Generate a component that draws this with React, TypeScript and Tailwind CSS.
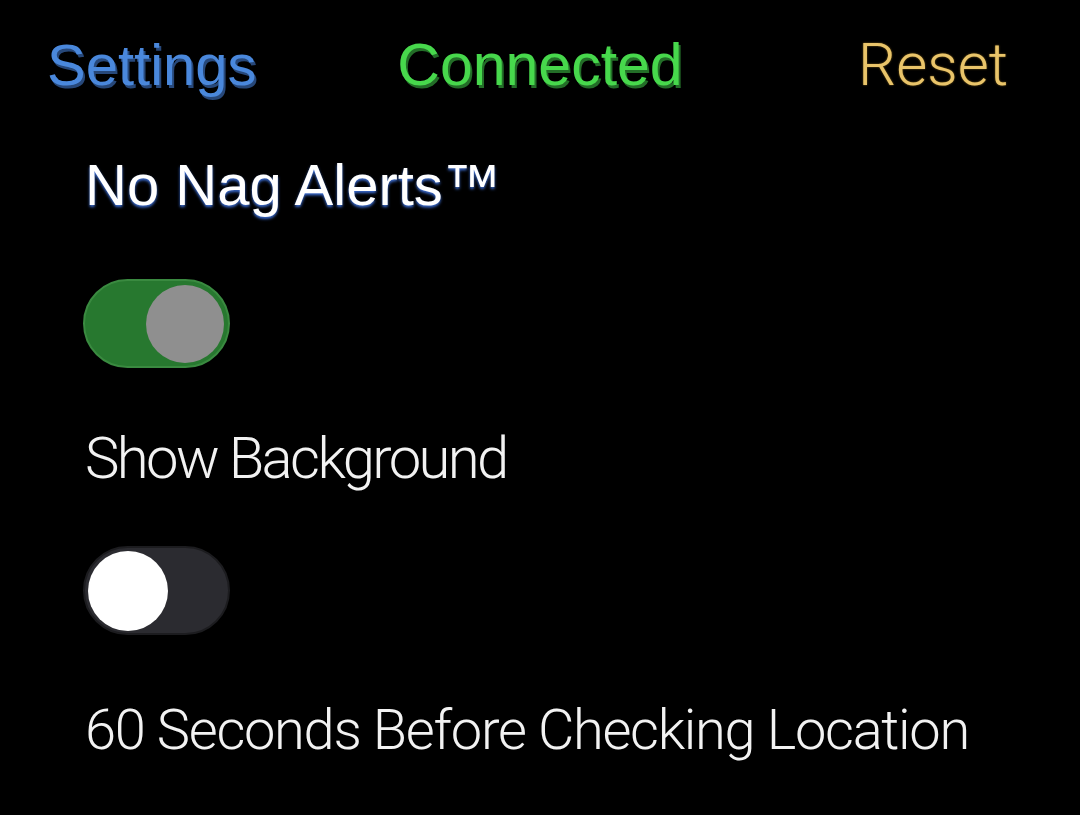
import { useState } from "react";

function Toggle({ on, onChange }: { on: boolean; onChange: () => void }) {
  return (
    <button
      type="button"
      onClick={onChange}
      className={
        on
          ? "flex h-[89px] w-[147px] items-center justify-end rounded-full border-2 border-[#3a8a40] bg-[#27782f] px-[4px]"
          : "flex h-[89px] w-[147px] items-center justify-start rounded-full border-2 border-[#1c1c1f] bg-[#2b2b30] px-[3px]"
      }
    >
      <span
        className={
          on
            ? "block h-[78px] w-[78px] rounded-full bg-[#8f8f8f]"
            : "block h-[80px] w-[80px] rounded-full bg-white"
        }
      />
    </button>
  );
}

export default function App() {
  const [noNag, setNoNag] = useState(true);
  const [showBg, setShowBg] = useState(false);

  return (
    <div className="h-[815px] w-[1080px] overflow-hidden bg-black font-['Liberation_Sans',Arial,sans-serif]">
      <div className="grid grid-cols-[1fr_auto_1fr] items-center px-[47px] pt-[30px] text-[58px] leading-[70px]">
        <span className="justify-self-start text-[#4a88dc] [text-shadow:2px_3px_0_#27487a]">Settings</span>
        <span className="text-[59px] text-[#47d84c] [text-shadow:2px_3px_0_#236e28]">Connected</span>
        <span className="mr-[25px] justify-self-end font-['Roboto',sans-serif] text-[60px] font-light text-[#e9c46a] [text-shadow:0_0_2px_#8a6a20]">
          Reset
        </span>
      </div>

      <div className="flex flex-col items-start pl-[83px]">
        <h1 className="mt-[50px] pl-[2px] text-[58px] leading-[70px] text-white [text-shadow:0_2px_3px_#3d6fd6]">
          No Nag Alerts™
        </h1>
        <div className="mt-[59px]">
          <Toggle on={noNag} onChange={() => setNoNag((v) => !v)} />
        </div>

        <p className="mt-[55px] pl-[2px] font-['Roboto',sans-serif] text-[58px] font-light leading-[70px] tracking-[-2.6px] text-[#f2f2f2]">
          Show Background
        </p>
        <div className="mt-[53px]">
          <Toggle on={showBg} onChange={() => setShowBg((v) => !v)} />
        </div>

        <p className="mt-[60px] pl-[2px] font-['Roboto',sans-serif] text-[56px] font-light leading-[70px] tracking-[-1.3px] text-[#f2f2f2]">
          60 Seconds Before Checking Location
        </p>
      </div>
    </div>
  );
}
